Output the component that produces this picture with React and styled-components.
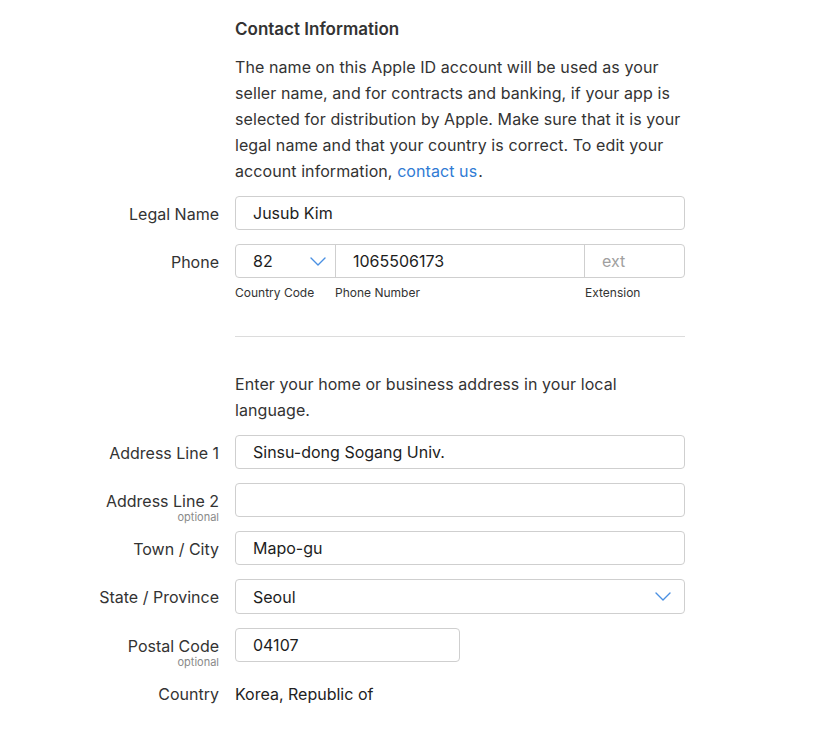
import React from 'react';
import styled, { createGlobalStyle } from 'styled-components';

const GlobalStyle = createGlobalStyle`
  body {
    margin: 0;
    background: #fff;
    font-family: Inter, "Noto Sans", sans-serif;
    color: #333;
  }
`;

const Page = styled.div`
  width: 831px;
  padding: 18px 0 40px;
`;

const Block = styled.div`
  margin-left: 235px;
  width: 450px;
`;

const Heading = styled.h2`
  margin: 0 0 14px;
  font-size: 17px;
  line-height: 22px;
  font-weight: 600;
  color: #333;
`;

const Paragraph = styled.p`
  margin: 0 0 ${props => props.gap || 12}px;
  font-size: 16px;
  line-height: 26px;
  letter-spacing: 0.08px;
  color: #333;
`;

const Link = styled.a`
  color: #2f7bd4;
  text-decoration: none;
  margin-right: 1px;
`;

const Row = styled.div`
  display: grid;
  grid-template-columns: 219px 450px;
  column-gap: 16px;
  align-items: start;
  margin-bottom: 14px;
`;

const Label = styled.div`
  text-align: right;
  font-size: 16px;
  line-height: 20px;
  padding-top: 8px;
  color: #333;
`;

const Optional = styled.div`
  font-size: 11px;
  line-height: 12px;
  color: #8a8a8a;
  margin-bottom: -6px;
`;

const Field = styled.div`
  display: flex;
  align-items: center;
  box-sizing: border-box;
  width: ${props => props.width || 450}px;
  height: ${props => props.h || 34}px;
  border: 1px solid #cfcfcf;
  border-radius: 4px;
  background: #fff;
  overflow: hidden;
`;

const Cell = styled.div`
  display: flex;
  align-items: center;
  justify-content: space-between;
  box-sizing: border-box;
  height: 100%;
  width: ${props => props.width ? props.width + 'px' : 'auto'};
  flex: ${props => props.width ? 'none' : 1};
  padding: 0 ${props => props.pr || 17}px 0 17px;
  font-size: 16px;
  color: ${props => props.muted ? '#a0a0a0' : '#1d1d1d'};
  border-left: ${props => props.divided ? '1px solid #cfcfcf' : 'none'};
`;

const SubLabels = styled.div`
  display: flex;
  margin-top: -6px;
  font-size: 12px;
  line-height: 14px;
  color: #333;
`;

const SubLabel = styled.div`
  width: ${props => props.width ? props.width + 'px' : 'auto'};
  flex: ${props => props.width ? 'none' : 1};
`;

const Divider = styled.hr`
  border: 0;
  border-top: 1px solid #dcdcdc;
  margin: 36px 0 34px;
`;

const StaticText = styled.div`
  font-size: 16px;
  line-height: 20px;
  padding-top: 8px;
  color: #222;
`;

const Chevron = () => (
  <svg width="16" height="9" viewBox="0 0 16 9" fill="none">
    <path d="M1 1l7 7 7-7" stroke="#4a90e2" strokeWidth="1.4" strokeLinecap="round" strokeLinejoin="round" />
  </svg>
);

const FormRow = ({ label, optional, children }) => (
  <Row>
    <Label>
      {label}
      {optional && <Optional>optional</Optional>}
    </Label>
    <div>{children}</div>
  </Row>
);

const TextField = ({ value, width }) => (
  <Field width={width}>
    <Cell>{value}</Cell>
  </Field>
);

export default function App() {
  return (
    <Page>
      <GlobalStyle />
      <Block>
        <Heading>Contact Information</Heading>
        <Paragraph>
          The name on this Apple ID account will be used as your seller name, and for contracts
          and banking, if your app is selected for distribution by Apple. Make sure that it is
          your legal name and that your country is correct. To edit your account information,{' '}
          <Link href="#">contact us</Link>.
        </Paragraph>
      </Block>

      <FormRow label="Legal Name">
        <TextField value="Jusub Kim" />
      </FormRow>

      <Row>
        <Label>Phone</Label>
        <div>
          <Field>
            <Cell width={99} pr={9}>
              <span>82</span>
              <Chevron />
            </Cell>
            <Cell divided>1065506173</Cell>
            <Cell width={100} divided muted>ext</Cell>
          </Field>
        </div>
      </Row>
      <Block>
        <SubLabels>
          <SubLabel width={100}>Country Code</SubLabel>
          <SubLabel>Phone Number</SubLabel>
          <SubLabel width={100}>Extension</SubLabel>
        </SubLabels>
        <Divider />
        <Paragraph gap={12}>Enter your home or business address in your local language.</Paragraph>
      </Block>

      <FormRow label="Address Line 1">
        <TextField value="Sinsu-dong Sogang Univ." />
      </FormRow>
      <FormRow label="Address Line 2" optional>
        <TextField value="" />
      </FormRow>
      <FormRow label="Town / City">
        <TextField value="Mapo-gu" />
      </FormRow>
      <FormRow label="State / Province">
        <Field h={35}>
          <Cell pr={13}>
            <span>Seoul</span>
            <Chevron />
          </Cell>
        </Field>
      </FormRow>
      <FormRow label="Postal Code" optional>
        <TextField value="04107" width={225} />
      </FormRow>
      <Row>
        <Label>Country</Label>
        <StaticText>Korea, Republic of</StaticText>
      </Row>
    </Page>
  );
}
